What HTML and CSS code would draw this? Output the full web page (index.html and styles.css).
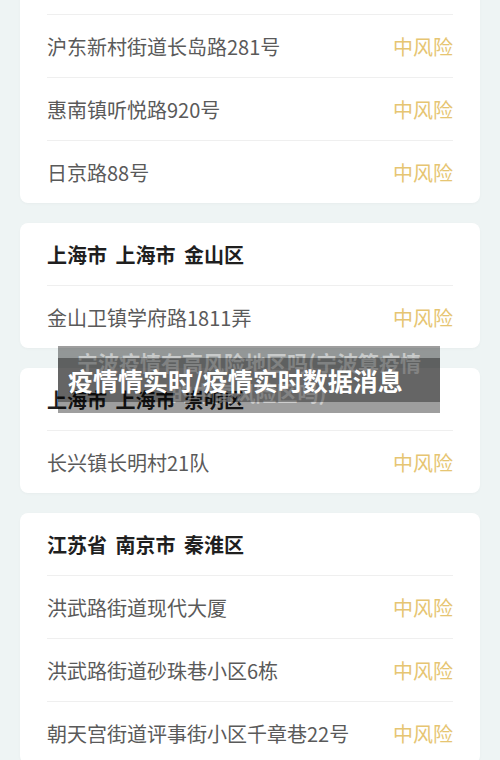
FILE: index.html
```html
<!DOCTYPE html>
<html lang="zh-CN">
<head>
<meta charset="UTF-8">
<meta name="viewport" content="width=device-width, initial-scale=1.0">
<title>疫情情实时/疫情实时数据消息</title>
<link rel="stylesheet" href="styles.css">
</head>
<body>
    <div class="page">
        <!-- 첫 카드는 위쪽이 화면 밖으로 잘려 있음 -->
        <div class="card card-cut">
            <div class="row"><span class="addr">沪东新村街道长岛路281号</span><span class="level">中风险</span></div>
            <div class="row"><span class="addr">惠南镇听悦路920号</span><span class="level">中风险</span></div>
            <div class="row"><span class="addr">日京路88号</span><span class="level">中风险</span></div>
        </div>
        <div class="card">
            <div class="card-head">上海市 上海市 金山区</div>
            <div class="row"><span class="addr">金山卫镇学府路1811弄</span><span class="level">中风险</span></div>
        </div>
        <div class="card">
            <div class="card-head">上海市 上海市 崇明区</div>
            <div class="row"><span class="addr">长兴镇长明村21队</span><span class="level">中风险</span></div>
        </div>
        <div class="card">
            <div class="card-head">江苏省 南京市 秦淮区</div>
            <div class="row"><span class="addr">洪武路街道现代大厦</span><span class="level">中风险</span></div>
            <div class="row"><span class="addr">洪武路街道砂珠巷小区6栋</span><span class="level">中风险</span></div>
            <div class="row"><span class="addr">朝天宫街道评事街小区千章巷22号</span><span class="level">中风险</span></div>
        </div>
    </div>

    <!-- 图片上的标题水印 -->
    <div class="caption">
        <div class="caption-old">宁波疫情有高风险地区吗(宁波算疫情<br>的中高风险区吗)</div>
        <div class="caption-band">疫情情实时/疫情实时数据消息</div>
    </div>
</body>
</html>
```

FILE: styles.css
```css
body{
    margin: 0;
    background: #eef4f4;
    font-family: "Noto Sans CJK SC", "Noto Sans", sans-serif;
    overflow: hidden;
}
.page{
    margin-top: -48px;
    padding: 0 20px;
}
.card{
    background: #ffffff;
    border-radius: 8px;
    padding: 0 27px;
    margin-bottom: 20px;
    box-shadow: 0 1px 3px rgba(0,0,0,0.03);
}
.card-cut{
    padding-top: 62px;
}
.card-head{
    height: 62px;
    display: flex;
    align-items: center;
    font-size: 20px;
    font-weight: bold;
    word-spacing: 4px;
    color: #1f1f1f;
}
.row{
    height: 62px;
    border-top: 1px solid #efefef;
    display: flex;
    align-items: center;
    justify-content: space-between;
    font-size: 20px;
}
.addr{
    color: #5a5a5a;
}
.level{
    color: #e6c572;
}
.caption{
    position: absolute;
    left: 58px;
    top: 346px;
    width: 382px;
    height: 67px;
    background: rgba(0,0,0,0.38);
}
.caption-old{
    padding-top: 1px;
    text-align: center;
    font-size: 21px;
    font-weight: bold;
    line-height: 30px;
    color: rgba(255,255,255,0.5);
}
.caption-band{
    position: absolute;
    left: 0;
    top: 12px;
    width: 100%;
    height: 44px;
    box-sizing: border-box;
    padding-left: 10px;
    display: flex;
    align-items: center;
    background: rgba(0,0,0,0.36);
    color: #ffffff;
    font-size: 25px;
    font-weight: bold;
}
```
